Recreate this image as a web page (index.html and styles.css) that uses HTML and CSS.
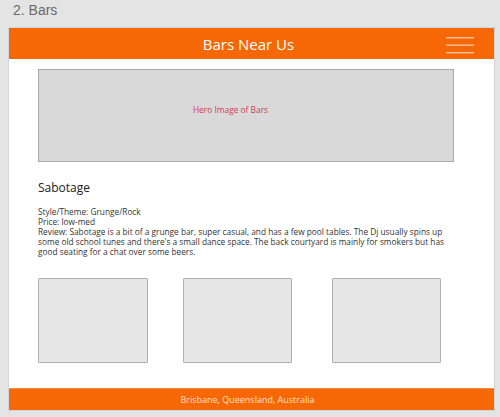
FILE: index.html
```html
<!DOCTYPE html>
<html lang="en">
<head>
<meta charset="utf-8">
<title>Bars</title>
<link rel="stylesheet" href="styles.css">
</head>
<body>
<div class="label">2. Bars</div>
<div class="frame">
  <header class="topbar">
    <h1 class="title">Bars Near Us</h1>
    <svg class="menu" width="28" height="18" viewBox="0 0 28 18">
      <rect x="0" y="1" width="28" height="1.4" fill="#f9c4a0"/>
      <rect x="0" y="8.5" width="28" height="1.4" fill="#f9c4a0"/>
      <rect x="0" y="16" width="28" height="1.4" fill="#f9c4a0"/>
    </svg>
  </header>
  <main class="content">
    <div class="hero">Hero Image of Bars</div>
    <h2 class="bar-name">Sabotage</h2>
    <div class="details">
      <p>Style/Theme: Grunge/Rock</p>
      <p>Price: low-med</p>
      <p>Review: Sabotage is a bit of a grunge bar, super casual, and has a few pool tables. The Dj usually spins up some old school tunes and there's a small dance space. The back courtyard is mainly for smokers but has good seating for a chat over some beers.</p>
    </div>
    <div class="thumbs">
      <div class="thumb t1"></div>
      <div class="thumb t2"></div>
      <div class="thumb t3"></div>
    </div>
  </main>
  <footer class="footer">Brisbane, Queensland, Australia</footer>
</div>
</body>
</html>
```
FILE: styles.css
```css
html, body {
  margin: 0;
  padding: 0;
}
body {
  background: #e4e4e4;
  width: 500px;
  height: 417px;
  overflow: hidden;
  font-family: "Open Sans", "Noto Sans", sans-serif;
}
.label {
  font-family: "Liberation Sans", Arial, sans-serif;
  font-size: 14px;
  color: #6a6a6a;
  line-height: 18px;
  padding: 1px 0 0 13px;
  height: 27px;
  box-sizing: border-box;
}
.frame {
  margin-left: 8px;
  width: 487px;
  height: 384px;
  box-sizing: border-box;
  border: 1px solid #cfd8dc;
  border-right-color: #d4d4d4;
  background: #fff;
  display: flex;
  flex-direction: column;
}
.topbar {
  height: 31px;
  background: #f66805;
  position: relative;
  display: flex;
  align-items: center;
  justify-content: center;
  padding-right: 6px;
}
.title {
  margin: 0;
  font-weight: 400;
  font-size: 15px;
  color: #fff;
  line-height: 20px;
}
.menu {
  position: absolute;
  right: 20px;
  top: 8px;
}
.content {
  flex: 1;
  padding: 10px 40px 0 29px;
}
.hero {
  height: 93px;
  box-sizing: border-box;
  border: 1px solid #a9a9a9;
  background: #d9d9d9;
  display: flex;
  align-items: center;
  justify-content: center;
  font-size: 8.4px;
  color: #d23a50;
  padding-right: 31px;
  padding-bottom: 13px;
}
.bar-name {
  margin: 17px 0 0 0;
  font-weight: 400;
  font-size: 12px;
  line-height: 18px;
  color: #222;
}
.details {
  margin-top: 10px;
  font-size: 8.3px;
  line-height: 10px;
  color: #333;
}
.details p {
  margin: 0;
}
.thumbs {
  margin-top: 21px;
  display: flex;
}
.thumb {
  width: 110px;
  height: 85px;
  box-sizing: border-box;
  border: 1px solid #b0b0b0;
  border-radius: 1px;
  background: #e7e7e7;
}
.t2 {
  width: 109px;
  margin-left: 35px;
}
.t3 {
  width: 109px;
  margin-left: 40px;
}
.footer {
  height: 22px;
  background: #f66805;
  border-top: 1px solid #f98b40;
  box-sizing: border-box;
  color: #fde3d0;
  font-size: 9px;
  display: flex;
  align-items: center;
  justify-content: center;
  padding-right: 8px;
}
```
